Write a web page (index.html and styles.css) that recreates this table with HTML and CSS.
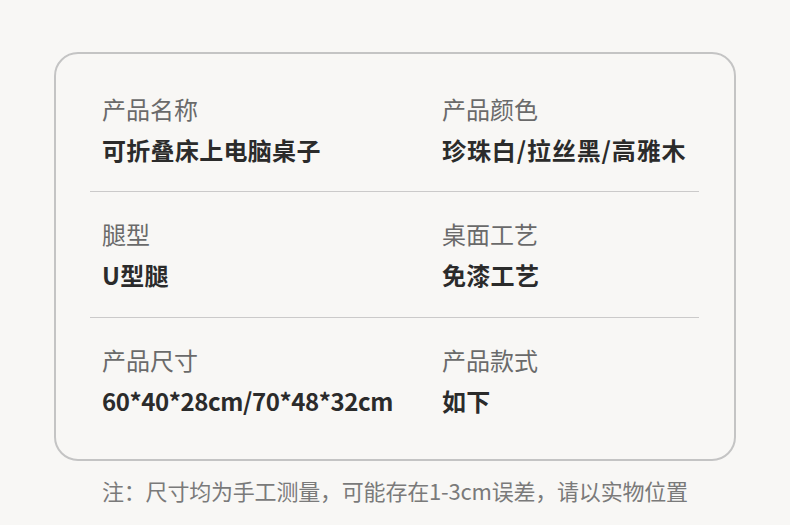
FILE: index.html
```html
<!DOCTYPE html>
<html lang="zh-CN">
<head>
<meta charset="utf-8">
<link rel="stylesheet" href="styles.css">
</head>
<body>
<div class="page">
  <div class="card">
    <div class="row">
      <div class="cell">
        <div class="label">产品名称</div>
        <div class="value">可折叠床上电脑桌子</div>
      </div>
      <div class="cell">
        <div class="label">产品颜色</div>
        <div class="value wide">珍珠白/拉丝黑/高雅木</div>
      </div>
    </div>
    <div class="row">
      <div class="cell">
        <div class="label">腿型</div>
        <div class="value">U型腿</div>
      </div>
      <div class="cell">
        <div class="label">桌面工艺</div>
        <div class="value">免漆工艺</div>
      </div>
    </div>
    <div class="row">
      <div class="cell">
        <div class="label">产品尺寸</div>
        <div class="value tight">60*40*28cm/70*48*32cm</div>
      </div>
      <div class="cell">
        <div class="label">产品款式</div>
        <div class="value">如下</div>
      </div>
    </div>
  </div>
  <div class="note">注：尺寸均为手工测量，可能存在1-3cm误差，请以实物位置</div>
</div>
</body>
</html>
```

FILE: styles.css
```css
html, body {
  margin: 0;
  padding: 0;
  background: #f8f7f5;
}
body {
  font-family: "Noto Sans CJK SC", "Noto Sans", sans-serif;
  width: 790px;
  height: 525px;
  overflow: hidden;
}
.page {
  padding: 52px 54px 0 54px;
}
.card {
  box-sizing: border-box;
  width: 682px;
  height: 409px;
  border: 2px solid #c4c4c4;
  border-radius: 24px;
  padding: 0 35px 0 34px;
  display: flex;
  flex-direction: column;
}
.row {
  display: grid;
  grid-template-columns: 340px 1fr;
  padding: 0 12px;
  height: 126px;
  box-sizing: border-box;
  border-bottom: 1px solid #cbcaca;
  align-content: center;
  row-gap: 6px;
}
.row:first-child {
  height: 138px;
  padding-top: 14px;
}
.row:last-child {
  border-bottom: none;
  height: 141px;
  padding-bottom: 16px;
}
.cell {
  display: flex;
  flex-direction: column;
  gap: 7px;
}
.label {
  font-size: 24px;
  line-height: 34px;
  color: #6a6a6a;
  font-weight: 400;
}
.value {
  font-size: 24px;
  line-height: 34px;
  color: #2b2b2b;
  font-weight: 700;
  letter-spacing: 0.3px;
}
.value.wide {
  letter-spacing: 0.9px;
}
.value.tight {
  letter-spacing: -0.4px;
}
.note {
  padding: 13px 0 0 48px;
  font-size: 22px;
  line-height: 32px;
  color: #7a7a7a;
  letter-spacing: -0.2px;
}
```
